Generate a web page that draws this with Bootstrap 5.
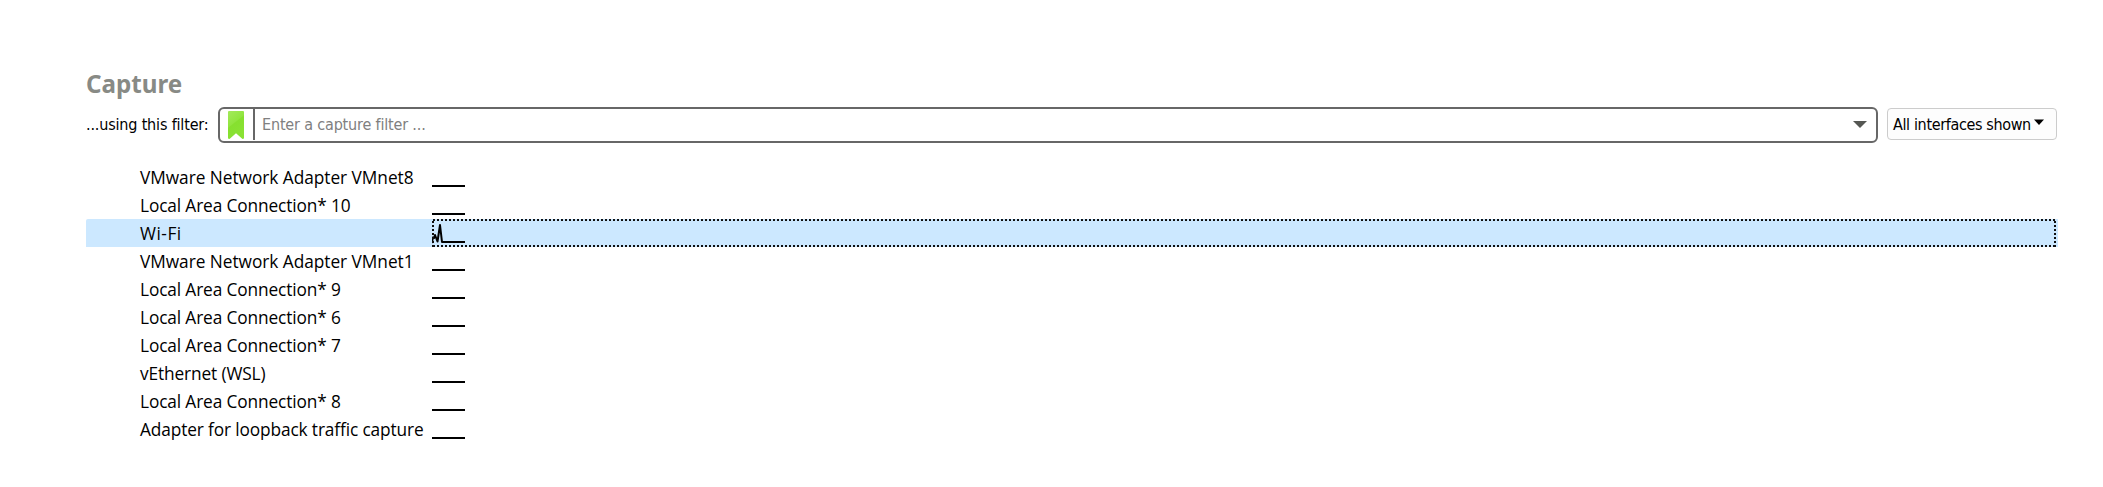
<!DOCTYPE html>
<html lang="en">
<head>
<meta charset="utf-8">
<title>Capture</title>
<link href="https://cdn.jsdelivr.net/npm/bootstrap@5.3.0/dist/css/bootstrap.min.css" rel="stylesheet">
<style>
  body { background: #fff; color: #000; font-family: "DejaVu Sans Condensed", "DejaVu Sans", sans-serif; font-size: 16px; overflow: hidden; }
  .capture-page { padding: 67px 45px 0 86px; }
  .capture-title { font: bold 24.2px/34px "Noto Sans", sans-serif; color: #888a85; height: 40px; }
  .filter-row { height: 36px; }
  .filter-label { width: 132px; letter-spacing: -.17px; line-height: 36px; }
  .filter-box { width: 1660px; height: 36px; border: 2px solid #676767; border-radius: 6px; }
  .filter-mark { width: 35px; height: 31px; border-right: 2px solid #676767; }
  .filter-mark svg { margin: 2px 0 0 8px; }
  .filter-box input { background: none; border: 0; outline: 0; padding: 0 0 0 7px; height: 31px; color: #808080; letter-spacing: -.17px; }
  .filter-box input::placeholder { color: #808080; opacity: 1; }
  .iface-btn { width: 170px; height: 32px; margin: 1px 0 0 9px; padding: 0 0 0 5px; border: 1px solid #ccc; border-radius: 4px; background: #fdfdfd; color: #000; font-size: 16px; line-height: 31px; letter-spacing: -.36px; }
  .iface-list { width: 1972px; margin-top: 20px; font: 17.3px/29px "Open Sans", "Noto Sans", sans-serif; letter-spacing: -.13px; }
  .iface-row { height: 28px; white-space: nowrap; }
  .iface-name { width: 346px; padding-left: 54px; }
  .vm { letter-spacing: -.04px; }
  .iface-row.selected { background: #cce8ff; border-radius: 2px 0 0 0; }
  .selected .iface-name { letter-spacing: .5px; }
  svg { display: block; flex: none; }
</style>
</head>
<body>
<main class="capture-page">
  <h1 class="capture-title m-0">Capture</h1>
  <div class="filter-row d-flex align-items-start">
    <label class="filter-label" for="filter">...using this filter:</label>
    <div class="filter-box d-flex">
      <div class="filter-mark flex-shrink-0">
        <svg width="16" height="28" viewBox="0 0 16 28"><defs><linearGradient id="g" x1="0" y1="0" x2=".45" y2="1"><stop offset="0" stop-color="#a3ea5c"/><stop offset=".48" stop-color="#91e53f"/><stop offset=".52" stop-color="#86e02f"/><stop offset="1" stop-color="#8ae234"/></linearGradient></defs><path d="M1 0H15Q16 0 16 1V27.4L14.5 28 8 22.2 1.5 28 0 27.4V1Q0 0 1 0Z" fill="url(#g)"/></svg>
      </div>
      <input class="flex-grow-1" id="filter" type="text" placeholder="Enter a capture filter ...">
      <svg width="23" height="32"><path d="M0 12H14L7 19Z" fill="#555753"/></svg>
    </div>
    <button class="iface-btn btn d-flex" type="button"><span>All interfaces shown</span><svg class="ms-auto" width="22" height="30"><path d="M0 10.5H10L5 16Z" fill="#000"/></svg></button>
  </div>
  <div class="iface-list" id="list"></div>
</main>
<script src="https://cdn.jsdelivr.net/npm/bootstrap@5.3.0/dist/js/bootstrap.bundle.min.js"></script>
<script>
  const names = ['VMware Network Adapter VMnet8', 'Local Area Connection* 10', 'Wi-Fi', 'VMware Network Adapter VMnet1',
    'Local Area Connection* 9', 'Local Area Connection* 6', 'Local Area Connection* 7', 'vEthernet (WSL)',
    'Local Area Connection* 8', 'Adapter for loopback traffic capture'];
  document.getElementById('list').innerHTML = names.map(n => {
    const active = n === 'Wi-Fi';
    const spark = active
      ? '<path d="M0 24L.8 18.5 2 19 3 16 5.5 22.5 8 6 10 23H33" fill="none" stroke="#000" stroke-width="2" stroke-linejoin="round"/><path d="M1 1H1624M1 27H1624M1 2V28M1623 2V28" fill="none" stroke="#111" stroke-width="2" stroke-dasharray="2 2"/>'
      : '<path d="M0 23H33" stroke="#000" stroke-width="2"/>';
    return `<div class="iface-row d-flex ${active ? 'selected' : ''}"><div class="iface-name ${n.startsWith('VM') ? 'vm' : ''}">${n}</div><svg width="1624" height="28">${spark}</svg></div>`;
  }).join('');
</script>
</body>
</html>
